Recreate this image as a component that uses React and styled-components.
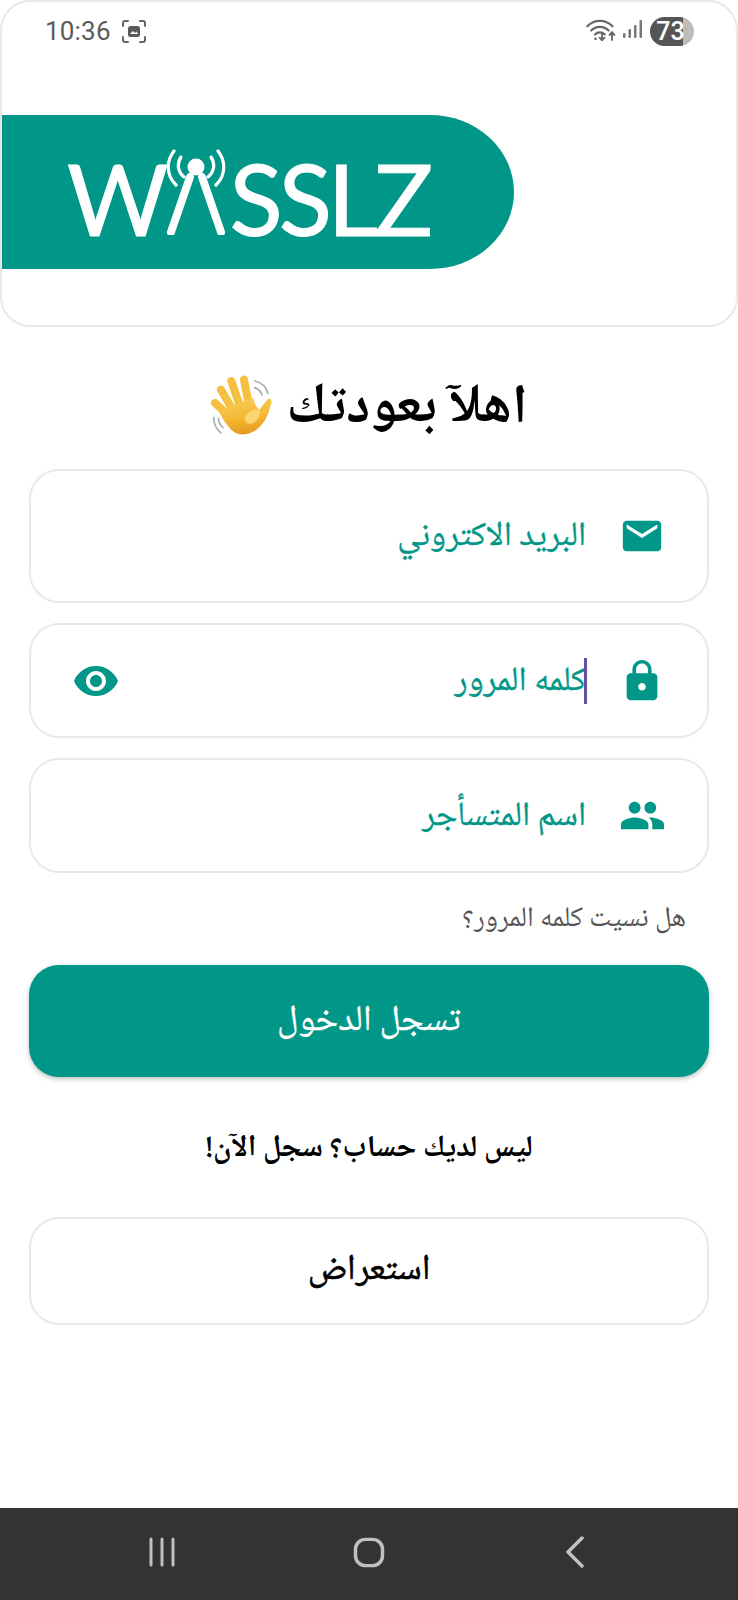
import React from "react";
import styled, { createGlobalStyle } from "styled-components";
import { MdEmail, MdLock, MdRemoveRedEye, MdPeople } from "react-icons/md";

const teal = "#009688";
const arabic = `"Noto Naskh Arabic", "Noto Sans Arabic", "DejaVu Sans", "Liberation Sans", sans-serif`;

const Global = createGlobalStyle`
  html, body { margin: 0; padding: 0; background: #fff; }
  * { box-sizing: border-box; }
`;

const Screen = styled.div`
  width: 738px;
  height: 1600px;
  display: flex;
  flex-direction: column;
  background: #fff;
  overflow: hidden;
  font-family: ${arabic};
`;

const HeaderCard = styled.header`
  height: 327px;
  border: 2px solid #e9e9e9;
  border-radius: 30px;
  display: flex;
  flex-direction: column;
  flex: none;
`;

const StatusBar = styled.div`
  height: 58px;
  margin-top: 12px;
  padding: 0 42px 0 43px;
  display: flex;
  align-items: flex-start;
  justify-content: space-between;
`;

const StatusGroup = styled.div`
  display: flex;
  align-items: center;
  gap: ${(p) => p.$gap}px;
  height: 34px;
`;

const StatusIcons = styled.div`
  display: flex;
  align-items: center;
  gap: 7px;
  margin-top: -3px;
`;

const Clock = styled.span`
  font-family: Roboto, sans-serif;
  font-size: 26px;
  color: #5a5a5a;
  letter-spacing: 0.2px;
`;

const Battery = styled.div`
  width: 44px;
  height: 29px;
  border-radius: 15px;
  background: linear-gradient(90deg, #555 0 76%, #bcbcbc 76% 100%);
  color: #fff;
  font-family: Roboto, sans-serif;
  font-size: 25px;
  font-weight: 500;
  display: flex;
  align-items: center;
  justify-content: center;
  padding-right: 3px;
`;

const Banner = styled.div`
  margin-top: 43px;
  height: 154px;
  width: 512px;
  background: ${teal};
  border-radius: 0 84px 84px 0 / 0 77px 77px 0;
  display: flex;
  align-items: flex-end;
  padding: 0 0 34px 65px;
  color: #fff;
  font-family: Lato, sans-serif;
  font-size: 98px;
  line-height: 73px;
`;

const LogoLetters = styled.span`
  display: block;
  height: 73px;
  letter-spacing: ${(p) => p.$spacing}px;
  -webkit-text-stroke: 1px #fff;
`;

const Antenna = styled.svg`
  width: 60px;
  height: 86px;
  margin: 0 3px 0 -2px;
  flex: none;
`;

const Main = styled.main`
  flex: 1;
  padding: 0 29px;
  display: flex;
  flex-direction: column;
`;

const Heading = styled.h1`
  margin: 48px 0 0;
  height: 62px;
  padding-right: 2px;
  display: flex;
  justify-content: center;
  align-items: center;
  gap: 13px;
  direction: rtl;
  font-size: 55px;
  line-height: 62px;
  font-weight: 700;
  color: #000;
`;

const HeadingText = styled.span`
  padding-top: 7px;
`;

const Hand = styled.svg`
  width: 65px;
  height: 62px;
  flex: none;
`;

const Field = styled.div`
  height: ${(p) => p.$h}px;
  margin-top: ${(p) => p.$mt}px;
  border: 2px solid #e9e9e9;
  border-radius: 30px;
  display: flex;
  align-items: center;
  direction: rtl;
  padding: 0 41px;
  color: ${teal};
  font-size: 34px;
  line-height: 46px;
  -webkit-text-stroke: 0.35px ${teal};
`;

const FieldIcon = styled.span`
  width: 48px;
  display: flex;
  justify-content: center;
  flex: none;
  margin-left: 32px;
`;

const FieldLabel = styled.span`
  position: relative;
  flex: 1;
  padding-top: 4px;
`;

const Caret = styled.i`
  position: absolute;
  right: -1px;
  top: 50%;
  width: 3px;
  height: 46px;
  margin-top: -23px;
  background: #6650a4;
`;

const Forgot = styled.div`
  margin-top: 32px;
  padding-right: 23px;
  direction: rtl;
  font-size: 28.2px;
  line-height: 30px;
  color: #555;
`;

const Primary = styled.button`
  margin-top: 30px;
  padding-top: 4px;
  height: 112px;
  width: 680px;
  flex: none;
  border: none;
  border-radius: 30px;
  background: ${teal};
  color: #fff;
  font-family: inherit;
  font-size: 36px;
  -webkit-text-stroke: 0.3px #fff;
  box-shadow: 0 2px 5px rgba(0, 0, 0, 0.25);
`;

const SignUp = styled.div`
  margin-top: 56px;
  text-align: center;
  direction: rtl;
  font-size: 30.3px;
  font-weight: 700;
  line-height: 34px;
  color: #000;
`;

const Ghost = styled.button`
  margin-top: 50px;
  height: 108px;
  width: 680px;
  flex: none;
  background: #fff;
  border: 2px solid #e9e9e9;
  border-radius: 30px;
  font-family: inherit;
  font-size: 36px;
  font-weight: 400;
  -webkit-text-stroke: 0.6px #000;
  color: #000;
`;

const NavBar = styled.nav`
  height: 92px;
  flex: none;
  background: #333;
  display: flex;
  align-items: center;
  justify-content: space-between;
  padding: 0 153px 4px 148px;
`;

const NavIcon = styled.svg`
  width: ${(p) => p.$w}px;
  height: ${(p) => p.$h || 32}px;
  margin-left: ${(p) => p.$ml || 0}px;
`;

function ScreenshotIcon() {
  return (
    <svg width="26" height="25" viewBox="0 0 26 25" fill="none">
      <path d="M2 7V4a2 2 0 0 1 2-2h3M19 2h3a2 2 0 0 1 2 2v3M24 18v3a2 2 0 0 1-2 2h-3M7 23H4a2 2 0 0 1-2-2v-3" stroke="#666" strokeWidth="2" strokeLinecap="round" />
      <rect x="7" y="7" width="12" height="11" rx="2.5" fill="#5a5a5a" />
      <path d="M9 15l3-3 2 2 1.5-1.5L17 15z" fill="#fff" />
    </svg>
  );
}

function WifiIcon() {
  return (
    <svg width="30" height="23" viewBox="0.5 0 27 21" fill="none" stroke="#666" strokeLinecap="round">
      <path d="M1.5 7.5C8 1 18 1 24.5 7.5" strokeWidth="2" />
      <path d="M5 11.5c4.500-4.500 11.500-4.500 16 0" strokeWidth="2" />
      <path d="M8.500 15c2.600-2.600 6.400-2.600 9 0" strokeWidth="2" />
      <circle cx="9" cy="19" r="1.200" fill="#666" stroke="none" />
      <path d="M15 14v6M12.800 18l2.200 2.500 2.200-2.500" strokeWidth="1.700" />
      <path d="M24 20v-7M21.800 15.500L24 13l2.200 2.500" strokeWidth="1.700" />
    </svg>
  );
}

function SignalIcon() {
  return (
    <svg width="19" height="19" viewBox="0 0 19 19" fill="#777">
      <rect x="0" y="13" width="2.500" height="5" rx="1" />
      <rect x="5.500" y="9" width="2.500" height="9" rx="1" />
      <rect x="11" y="5" width="2.500" height="13" rx="1" />
      <rect x="16.500" y="0" width="2.500" height="18" rx="1" />
    </svg>
  );
}

function HandIcon() {
  return (
    <Hand viewBox="25 30 195 186" role="img" aria-label="waving hand">
      <defs>
        <linearGradient id="skin" x1="0" y1="0" x2="0.2" y2="1">
          <stop offset="0" stopColor="#f8cf5e" />
          <stop offset="0.6" stopColor="#f4b935" />
          <stop offset="1" stopColor="#e99c20" />
        </linearGradient>
      </defs>
      <g fill="none" stroke="#a9adb3" strokeWidth="5" strokeLinecap="round">
        <path d="M165 48c20 4 35 18 40 38" />
        <path d="M165 68c10 3 18 10 22 22" />
        <path d="M42 158c0 18 8 34 22 46" />
        <path d="M56 160c1 11 6 21 14 28" />
      </g>
      <g fill="none" stroke="#f5c03f" strokeWidth="24" strokeLinecap="round">
        <path d="M46 114l44 40" />
        <path d="M64 74l36 62" />
        <path d="M95 48l26 76" />
        <path d="M133 44l15 78" />
      </g>
      <path d="M66 134L160 98Q168 128 180 134Q192 116 205 102Q220 98 214 118Q202 172 170 194Q124 224 92 192Q72 170 58 140Z" fill="url(#skin)" />
      <path d="M140 150c14-18 34-18 42-14-2 24-18 44-34 40-12-3-16-14-8-26z" fill="#f9d66f" />
    </Hand>
  );
}

function AntennaA() {
  return (
    <Antenna viewBox="0 0 60 86" fill="none" stroke="#fff" strokeLinecap="round" aria-hidden="true">
      <path d="M5 83L24 28M55 83L36 28" strokeWidth="8" />
      <circle cx="30" cy="18" r="8.500" fill="#fff" stroke="none" />
      <path d="M15 8c-4 6-4 14 3 20M45 8c4 6 4 14-3 20" strokeWidth="3.200" />
      <path d="M8 2C0 12 0 26 10 36M52 2c8 10 8 24-2 34" strokeWidth="3.200" />
    </Antenna>
  );
}

export default function App() {
  return (
    <Screen>
      <Global />
      <HeaderCard>
        <StatusBar>
          <StatusGroup $gap={10}>
            <Clock>10:36</Clock>
            <ScreenshotIcon />
          </StatusGroup>
          <StatusGroup $gap={8}>
            <StatusIcons>
              <WifiIcon />
              <SignalIcon />
            </StatusIcons>
            <Battery>73</Battery>
          </StatusGroup>
        </StatusBar>
        <Banner>
          <LogoLetters>W</LogoLetters>
          <AntennaA />
          <LogoLetters $spacing={-4}>SSLZ</LogoLetters>
        </Banner>
      </HeaderCard>
      <Main>
        <Heading>
          <HeadingText>اهلآ بعودتك</HeadingText>
          <HandIcon />
        </Heading>
        <Field $h={134} $mt={32}>
          <FieldIcon><MdEmail size={46} /></FieldIcon>
          <FieldLabel>البريد الاكتروني</FieldLabel>
        </Field>
        <Field $h={115} $mt={20}>
          <FieldIcon><MdLock size={46} /></FieldIcon>
          <FieldLabel>
            <Caret />
            كلمه المرور
          </FieldLabel>
          <MdRemoveRedEye size={48} />
        </Field>
        <Field $h={115} $mt={20}>
          <FieldIcon><MdPeople size={47} /></FieldIcon>
          <FieldLabel>اسم المتسأجر</FieldLabel>
        </Field>
        <Forgot>هل نسيت كلمه المرور؟</Forgot>
        <Primary>تسجل الدخول</Primary>
        <SignUp>ليس لديك حساب؟ سجل الآن!</SignUp>
        <Ghost>استعراض</Ghost>
      </Main>
      <NavBar>
        <NavIcon $w={28} viewBox="0 0 28 32" stroke="#c0c0c0" strokeWidth="3" strokeLinecap="round">
          <path d="M3 3v26M14 3v26M25 3v26" />
        </NavIcon>
        <NavIcon $w={32} $h={31} $ml={-4} viewBox="0 0 32 32" preserveAspectRatio="none" fill="none" stroke="#c0c0c0" strokeWidth="3.500">
          <rect x="2.500" y="2.500" width="27" height="27" rx="10" />
        </NavIcon>
        <NavIcon $w={20} viewBox="0 0 20 32" fill="none" stroke="#c0c0c0" strokeWidth="3.500" strokeLinecap="round" strokeLinejoin="round">
          <path d="M17 2L3 16l14 14" />
        </NavIcon>
      </NavBar>
    </Screen>
  );
}
